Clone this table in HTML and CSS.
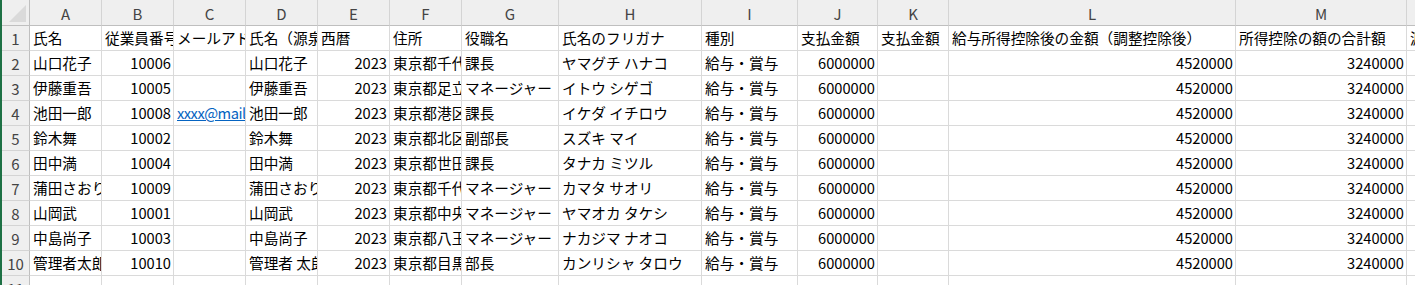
FILE: index.html
```html
<!DOCTYPE html>
<html lang="ja">
<head>
<meta charset="utf-8">
<title>Sheet1</title>
<link rel="stylesheet" href="styles.css">
</head>
<body>
<div class="sheet">
  <div class="corner"><span class="tri"></span></div>
  <div class="ch">A</div><div class="ch">B</div><div class="ch">C</div><div class="ch">D</div><div class="ch">E</div><div class="ch">F</div><div class="ch">G</div><div class="ch">H</div><div class="ch">I</div><div class="ch">J</div><div class="ch">K</div><div class="ch">L</div><div class="ch">M</div><div class="ch">N</div>

  <div class="rh">1</div>
  <div class="c">氏名</div><div class="c">従業員番号</div><div class="c">メールアドレス</div><div class="c">氏名（源泉徴収票）</div><div class="c">西暦</div><div class="c">住所</div><div class="c">役職名</div><div class="c">氏名のフリガナ</div><div class="c">種別</div><div class="c">支払金額</div><div class="c">支払金額</div><div class="c">給与所得控除後の金額（調整控除後）</div><div class="c">所得控除の額の合計額</div><div class="c">源泉徴収税額</div>

  <div class="rh">2</div>
  <div class="c">山口花子</div><div class="c n">10006</div><div class="c"></div><div class="c">山口花子</div><div class="c n">2023</div><div class="c">東京都千代田区</div><div class="c">課長</div><div class="c">ヤマグチ ハナコ</div><div class="c">給与・賞与</div><div class="c n">6000000</div><div class="c"></div><div class="c n">4520000</div><div class="c n">3240000</div><div class="c"></div>

  <div class="rh">3</div>
  <div class="c">伊藤重吾</div><div class="c n">10005</div><div class="c"></div><div class="c">伊藤重吾</div><div class="c n">2023</div><div class="c">東京都足立区</div><div class="c">マネージャー</div><div class="c">イトウ シゲゴ</div><div class="c">給与・賞与</div><div class="c n">6000000</div><div class="c"></div><div class="c n">4520000</div><div class="c n">3240000</div><div class="c"></div>

  <div class="rh">4</div>
  <div class="c">池田一郎</div><div class="c n">10008</div><div class="c"><span class="link">xxxx@mail.example.com</span></div><div class="c">池田一郎</div><div class="c n">2023</div><div class="c">東京都港区</div><div class="c">課長</div><div class="c">イケダ イチロウ</div><div class="c">給与・賞与</div><div class="c n">6000000</div><div class="c"></div><div class="c n">4520000</div><div class="c n">3240000</div><div class="c"></div>

  <div class="rh">5</div>
  <div class="c">鈴木舞</div><div class="c n">10002</div><div class="c"></div><div class="c">鈴木舞</div><div class="c n">2023</div><div class="c">東京都北区</div><div class="c">副部長</div><div class="c">スズキ マイ</div><div class="c">給与・賞与</div><div class="c n">6000000</div><div class="c"></div><div class="c n">4520000</div><div class="c n">3240000</div><div class="c"></div>

  <div class="rh">6</div>
  <div class="c">田中満</div><div class="c n">10004</div><div class="c"></div><div class="c">田中満</div><div class="c n">2023</div><div class="c">東京都世田谷区</div><div class="c">課長</div><div class="c">タナカ ミツル</div><div class="c">給与・賞与</div><div class="c n">6000000</div><div class="c"></div><div class="c n">4520000</div><div class="c n">3240000</div><div class="c"></div>

  <div class="rh">7</div>
  <div class="c">蒲田さおり</div><div class="c n">10009</div><div class="c"></div><div class="c">蒲田さおり</div><div class="c n">2023</div><div class="c">東京都千代田区</div><div class="c">マネージャー</div><div class="c">カマタ サオリ</div><div class="c">給与・賞与</div><div class="c n">6000000</div><div class="c"></div><div class="c n">4520000</div><div class="c n">3240000</div><div class="c"></div>

  <div class="rh">8</div>
  <div class="c">山岡武</div><div class="c n">10001</div><div class="c"></div><div class="c">山岡武</div><div class="c n">2023</div><div class="c">東京都中央区</div><div class="c">マネージャー</div><div class="c">ヤマオカ タケシ</div><div class="c">給与・賞与</div><div class="c n">6000000</div><div class="c"></div><div class="c n">4520000</div><div class="c n">3240000</div><div class="c"></div>

  <div class="rh">9</div>
  <div class="c">中島尚子</div><div class="c n">10003</div><div class="c"></div><div class="c">中島尚子</div><div class="c n">2023</div><div class="c">東京都八王子市</div><div class="c">マネージャー</div><div class="c">ナカジマ ナオコ</div><div class="c">給与・賞与</div><div class="c n">6000000</div><div class="c"></div><div class="c n">4520000</div><div class="c n">3240000</div><div class="c"></div>

  <div class="rh">10</div>
  <div class="c">管理者太郎</div><div class="c n">10010</div><div class="c"></div><div class="c">管理者 太郎</div><div class="c n">2023</div><div class="c">東京都目黒区</div><div class="c">部長</div><div class="c">カンリシャ タロウ</div><div class="c">給与・賞与</div><div class="c n">6000000</div><div class="c"></div><div class="c n">4520000</div><div class="c n">3240000</div><div class="c"></div>

  <div class="rh">11</div>
  <div class="c"></div><div class="c"></div><div class="c"></div><div class="c"></div><div class="c"></div><div class="c"></div><div class="c"></div><div class="c"></div><div class="c"></div><div class="c"></div><div class="c"></div><div class="c"></div><div class="c"></div><div class="c"></div>
</div>
</body>
</html>
```

FILE: styles.css
```css
html, body {
  margin: 0;
  padding: 0;
  background: #ffffff;
  overflow: hidden;
}

body {
  font-family: "Noto Sans CJK JP", "Noto Sans", sans-serif;
  font-size: 14.67px;
  color: #000;
}

.sheet {
  display: grid;
  grid-template-columns: 28px 72px 72px 72px 72px 72px 72px 97px 143px 96px 80px 71px 287px 171px 120px;
  grid-template-rows: 26px repeat(11, 25px);
  border-left: 2px solid #1e7145;
  width: max-content;
}

.sheet > div {
  box-sizing: border-box;
  overflow: hidden;
  white-space: nowrap;
}

.corner {
  background: #efefef;
  border-right: 1px solid #bfbfbf;
  border-bottom: 1px solid #bfbfbf;
  position: relative;
}

.tri {
  position: absolute;
  right: 3px;
  bottom: 3px;
  width: 0;
  height: 0;
  border-left: 17px solid transparent;
  border-bottom: 17px solid #dadada;
}

.ch {
  background: #efefef;
  border-right: 1px solid #d4d4d4;
  border-bottom: 1px solid #bfbfbf;
  color: #444;
  font-size: 15px;
  display: flex;
  align-items: center;
  justify-content: center;
  line-height: 1;
  padding-top: 1px;
}

.rh {
  background: #efefef;
  border-right: 1px solid #bfbfbf;
  border-bottom: 1px solid #d4d4d4;
  color: #444;
  font-size: 15px;
  display: flex;
  align-items: center;
  justify-content: center;
  line-height: 1;
  padding-top: 1px;
}

.c {
  border-right: 1px solid #dadada;
  border-bottom: 1px solid #dadada;
  padding: 0 3px 0 3px;
  line-height: 24px;
}

.c.n {
  text-align: right;
  padding-right: 2px;
}

.link {
  color: #0563c1;
  text-decoration: underline;
  letter-spacing: -0.5px;
}
```
